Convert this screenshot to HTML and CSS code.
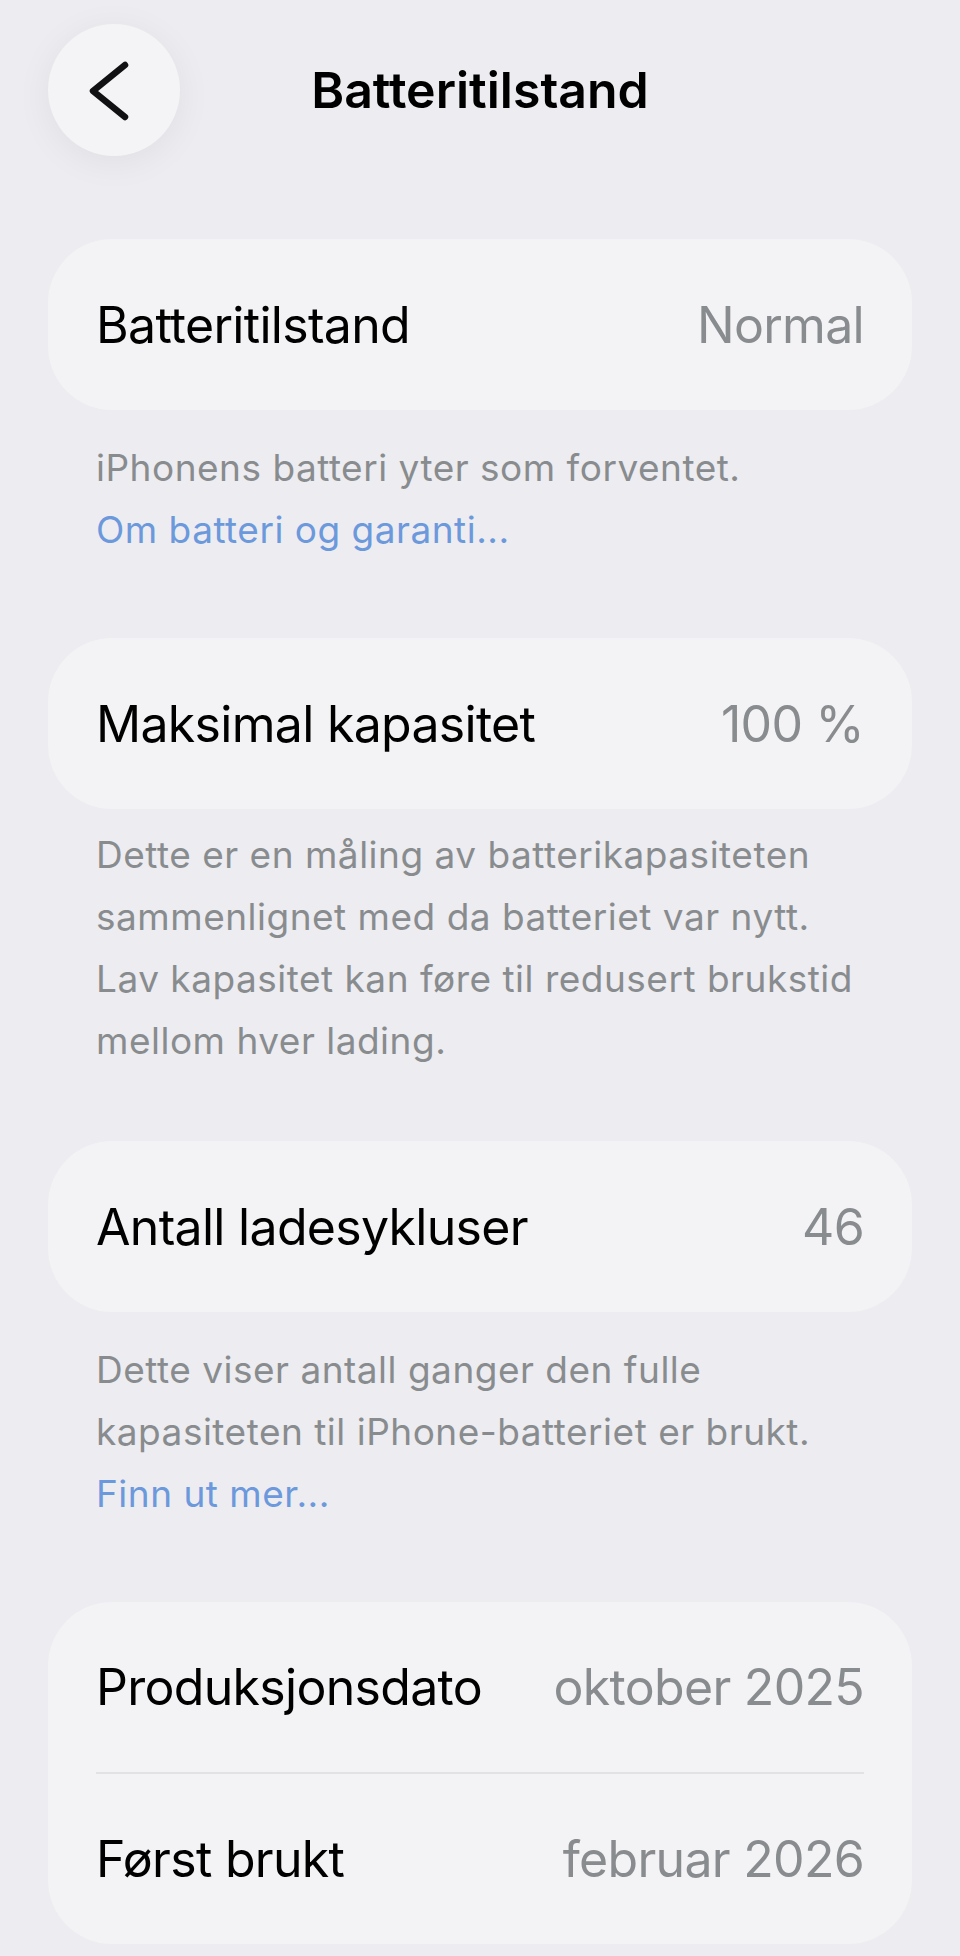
FILE: index.html
```html
<!DOCTYPE html>
<html lang="no">
<head>
<meta charset="utf-8">
<title>Batteritilstand</title>
<link rel="stylesheet" href="styles.css">
</head>
<body>
<div class="screen">
  <header class="nav">
    <button class="back" aria-label="Tilbake">
      <svg width="132" height="132" viewBox="0 0 132 132" aria-hidden="true">
        <path d="M77 41 L45 67 L77 93" fill="none" stroke="#111114" stroke-width="6.5" stroke-linecap="round" stroke-linejoin="round"/>
      </svg>
    </button>
    <h1 class="nav-title">Batteritilstand</h1>
    <span class="nav-spacer"></span>
  </header>

  <main class="content">
    <section class="group">
      <div class="card">
        <div class="row"><span class="label">Batteritilstand</span><span class="value">Normal</span></div>
      </div>
      <p class="footer">iPhonens batteri yter som forventet.<br><a class="link" href="#">Om batteri og garanti...</a></p>
    </section>

    <section class="group">
      <div class="card">
        <div class="row"><span class="label">Maksimal kapasitet</span><span class="value">100 %</span></div>
      </div>
      <p class="footer footer-tight">Dette er en måling av batterikapasiteten sammenlignet med da batteriet var nytt. Lav kapasitet kan føre til redusert brukstid mellom hver lading.</p>
    </section>

    <section class="group">
      <div class="card">
        <div class="row"><span class="label">Antall ladesykluser</span><span class="value">46</span></div>
      </div>
      <p class="footer">Dette viser antall ganger den fulle kapasiteten til iPhone-batteriet er brukt.<br><a class="link" href="#">Finn ut mer...</a></p>
    </section>

    <section class="group">
      <div class="card">
        <div class="row"><span class="label">Produksjonsdato</span><span class="value">oktober 2025</span></div>
        <div class="divider"></div>
        <div class="row"><span class="label">Først brukt</span><span class="value">februar 2026</span></div>
      </div>
    </section>
  </main>
</div>
</body>
</html>
```

FILE: styles.css
```css
* { box-sizing: border-box; }

html, body {
  margin: 0;
  padding: 0;
  background: #edecf0;
}

body {
  font-family: "Inter", "Noto Sans", "Liberation Sans", sans-serif;
  color: #000;
  -webkit-font-smoothing: antialiased;
}

.screen {
  width: 960px;
  min-height: 1956px;
  padding: 24px 48px 0;
}

.nav {
  display: grid;
  grid-template-columns: 132px 1fr 132px;
  align-items: center;
  height: 132px;
}

.back {
  width: 132px;
  height: 132px;
  border: none;
  padding: 0;
  border-radius: 50%;
  background: #f4f3f5;
  box-shadow: 0 6px 36px rgba(0, 0, 0, 0.06);
  display: flex;
  align-items: center;
  justify-content: center;
}

.back svg { display: block; }

.nav-title {
  margin: 0;
  text-align: center;
  font-size: 50px;
  font-weight: 600;
  letter-spacing: 0;
  line-height: 1;
}

.content {
  margin-top: 83px;
  display: flex;
  flex-direction: column;
}

.card {
  background: #f3f2f4;
  border-radius: 64px;
  padding: 0 48px;
}

.row {
  height: 171px;
  display: flex;
  align-items: center;
  justify-content: space-between;
  gap: 24px;
  font-size: 50px;
  letter-spacing: -0.7px;
}

.card:has(.divider) .row { height: 170px; }

.label { color: #000; }

.value { color: #898c8f; }

.divider {
  height: 2px;
  background: #e2e1e4;
}

.footer {
  margin: 27px 0 77px;
  padding: 0 48px;
  font-size: 37px;
  line-height: 62px;
  color: #898c8f;
  letter-spacing: 0.5px;
}

.footer-tight {
  margin: 15px 0 69px;
}

.link {
  color: #6b99dc;
  text-decoration: none;
}
```
